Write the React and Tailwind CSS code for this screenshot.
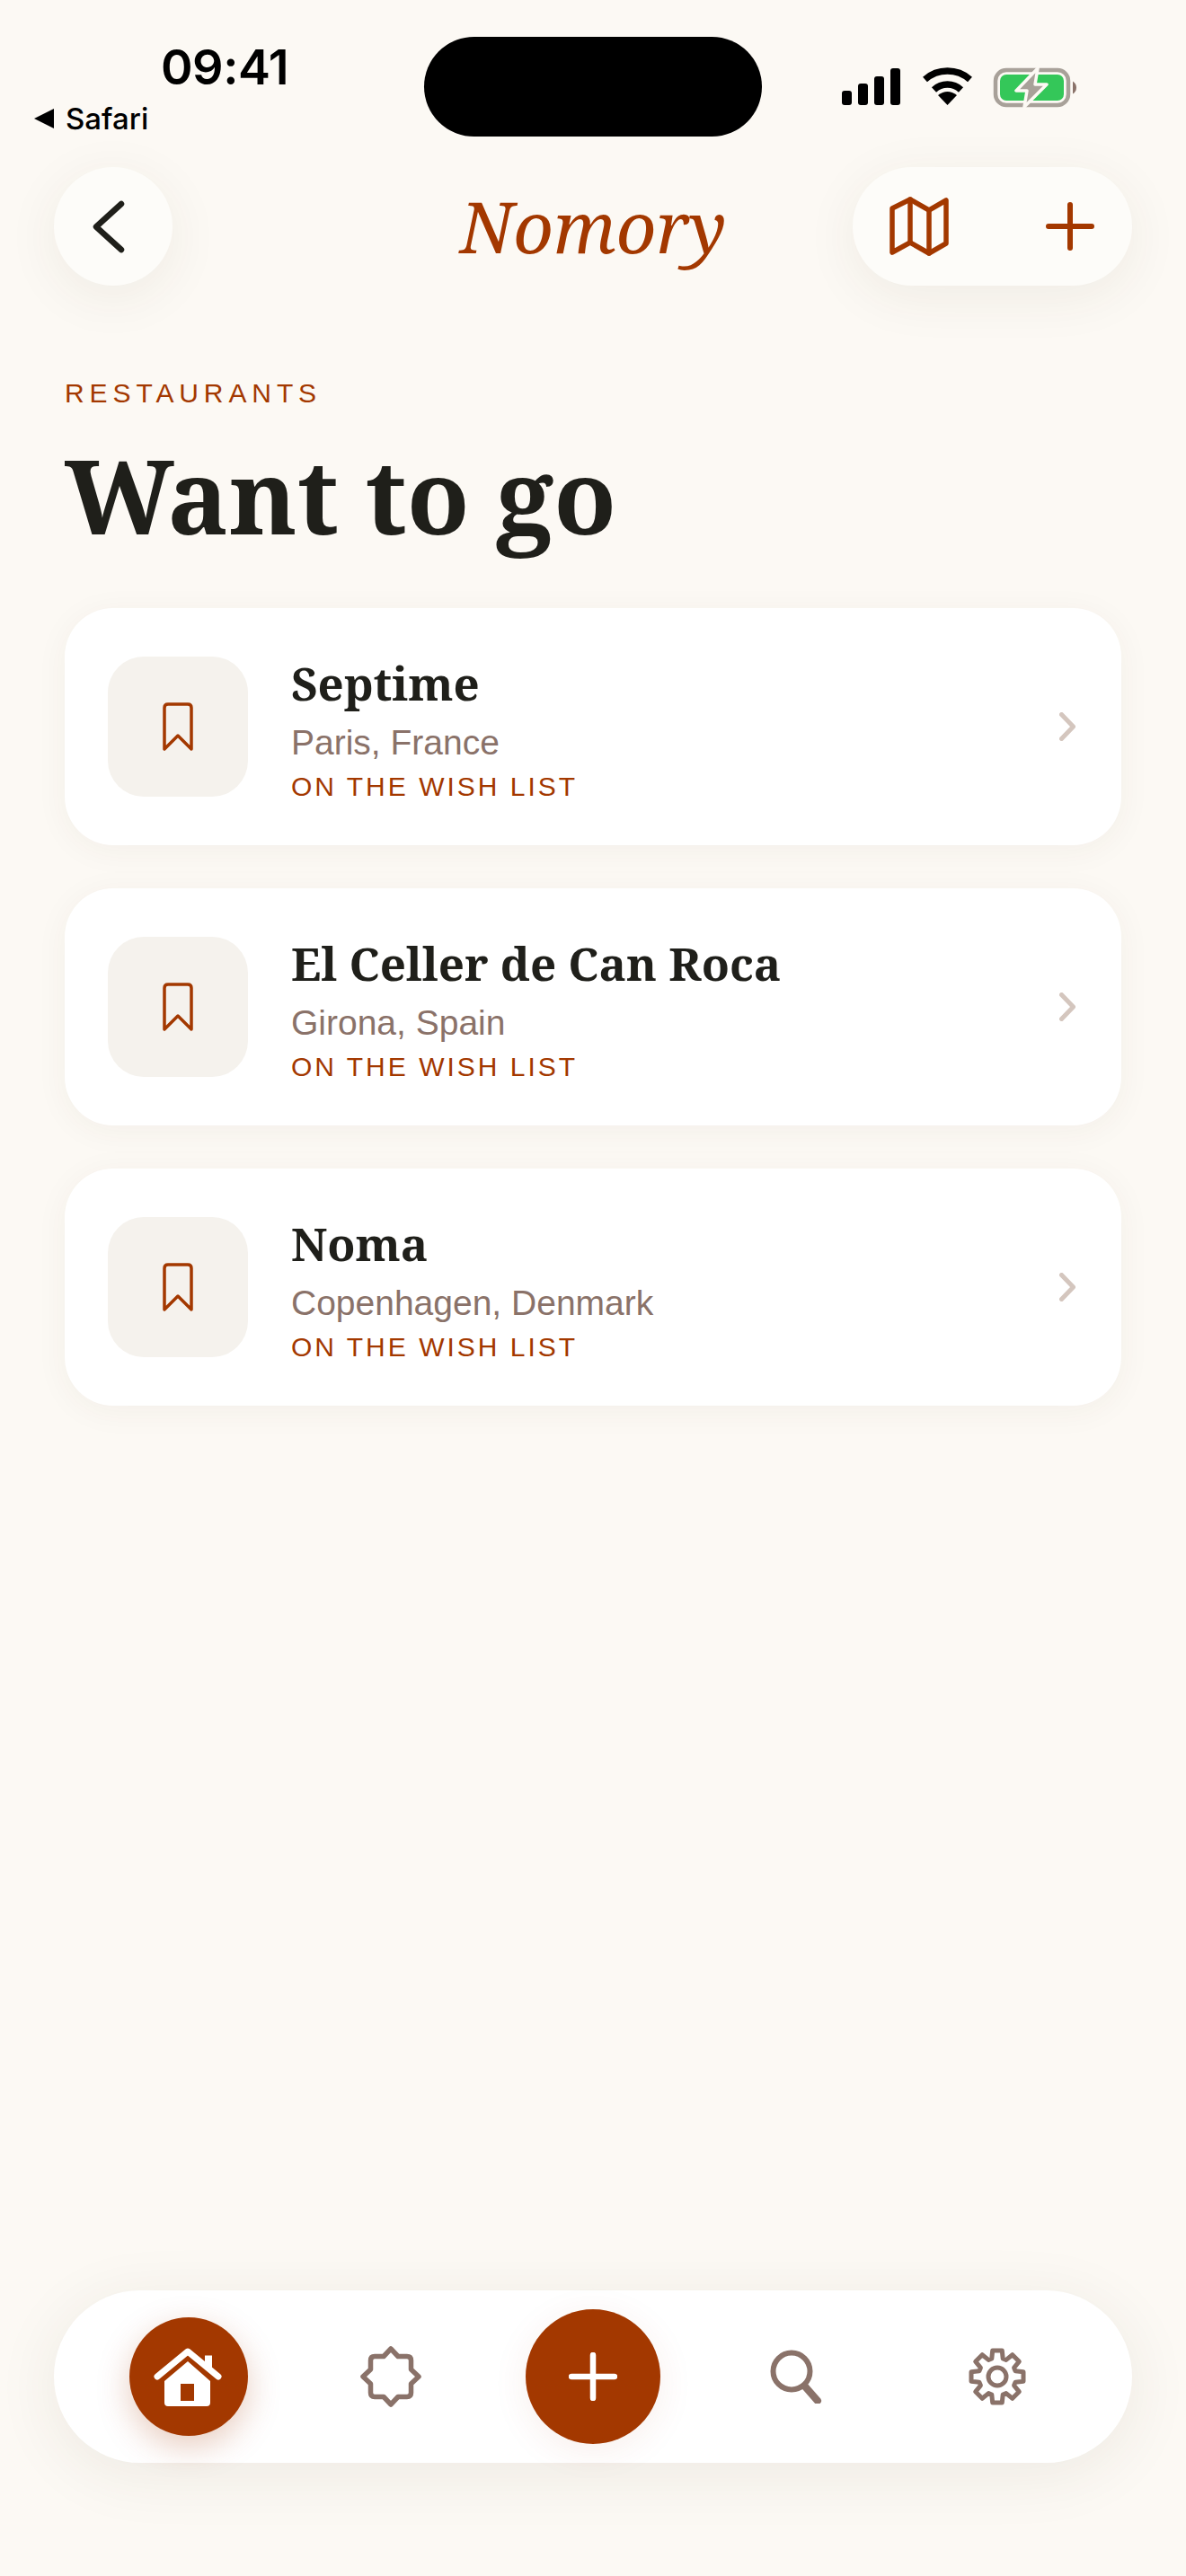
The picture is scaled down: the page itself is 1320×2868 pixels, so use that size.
const serif = "font-['Noto_Serif',serif]"

const places = [
  { name: 'Septime', place: 'Paris, France' },
  { name: 'El Celler de Can Roca', place: 'Girona, Spain' },
  { name: 'Noma', place: 'Copenhagen, Denmark' },
]

// 8 tooth gear outline, in a 66x66 box
function gearPath() {
  const pts = []
  for (let i = 0; i < 8; i++) {
    const a = (i * Math.PI) / 4
    const step = [
      [-0.3, 21],
      [-0.18, 29.5],
      [0.18, 29.5],
      [0.3, 21],
    ]
    step.forEach(([d, r]) => {
      const x = 33 + r * Math.sin(a + d)
      const y = 33 - r * Math.cos(a + d)
      pts.push(`${x.toFixed(1)} ${y.toFixed(1)}`)
    })
  }
  return 'M' + pts.join('L') + 'Z'
}

function StatusBar() {
  return (
    <div className="flex h-[186px] items-start font-['Inter',sans-serif] text-black">
      <div className="w-[472px] shrink-0">
        <div className="pl-[179px] pt-[42px] text-[54px] leading-[66px] font-semibold tracking-[-0.5px]">09:41</div>
        <div className="mt-[4px] flex items-center gap-[13px] pl-[38px] text-[33px] leading-[40px] font-medium">
          <span className="h-0 w-0 border-y-[11px] border-r-[22px] border-y-transparent border-r-black"></span>
          <span>Safari</span>
        </div>
      </div>
      <div className="mt-[41px] h-[111px] w-[376px] shrink-0 rounded-[56px] bg-black"></div>
      <div className="ml-[89px] mt-[75px] flex items-start">
        {/* signal */}
        <svg width="65" height="42" viewBox="0 0 65 42" fill="black">
          <rect x="0" y="26" width="11" height="16" rx="3" />
          <rect x="18" y="18" width="11" height="24" rx="3" />
          <rect x="36" y="10" width="11" height="32" rx="3" />
          <rect x="54" y="1" width="11" height="41" rx="3" />
        </svg>
        {/* wifi */}
        <svg className="ml-[24px]" width="58" height="42" viewBox="0 0 58 42" fill="none" stroke="black">
          <path d="M3.5 13.5A38 38 0 0 1 53.5 13.5" strokeWidth="7.5" />
          <path d="M13.5 25A22 22 0 0 1 43.5 25" strokeWidth="7.5" />
          <path d="M28.5 42L18 31Q28.5 23 39 31Z" fill="black" stroke="none" />
        </svg>
        {/* battery */}
        <svg className="ml-[21px]" width="94" height="46" viewBox="0 0 94 46" fill="none">
          <rect x="3" y="3" width="81" height="39" rx="12" stroke="#a8a199" strokeWidth="4.5" />
          <rect x="8" y="8" width="71" height="29" rx="7" fill="#34c759" />
          <path d="M89 15.5Q93 18 93 22.5T89 29.5Z" fill="#8a7269" />
          <path d="M50 1L26 26H38L35 44L60 19H47Z" fill="#a8a199" stroke="#fcf9f4" strokeWidth="3.5" strokeLinejoin="round" />
        </svg>
      </div>
    </div>
  )
}

function Header() {
  return (
    <div className="mx-[60px] grid h-[132px] grid-cols-[1fr_auto_1fr] items-center">
      <button className="flex h-[132px] w-[132px] items-center justify-center rounded-full bg-[#fdfcf9] shadow-[0_12px_60px_rgba(70,50,30,0.07)]">
        <svg width="132" height="132" viewBox="0 0 132 132" fill="none" stroke="#1f1f1a" strokeWidth="6.5" strokeLinecap="round" strokeLinejoin="round">
          <path d="M75 41L47 66.5L75 92" />
        </svg>
      </button>
      <div className={`${serif} text-[78px] leading-[100px] italic text-[#a33800]`}>Nomory</div>
      <div className="flex h-[132px] w-[311px] items-center justify-self-end rounded-full bg-[#fdfcf9] pl-[41px] shadow-[0_12px_60px_rgba(70,50,30,0.07)]">
        <svg width="66" height="66" viewBox="0 0 66 66" fill="none" stroke="#a33800" strokeWidth="5.5" strokeLinecap="round" strokeLinejoin="round">
          <path d="M3 13L23 3L44 15L63 4V52L44 63L23 51L3 62Z" />
          <path d="M23 3V51M44 15V63" />
        </svg>
        <svg className="ml-[108px]" width="54" height="54" viewBox="0 0 54 54" fill="none" stroke="#a33800" strokeWidth="6" strokeLinecap="round">
          <path d="M27 3V51M3 27H51" />
        </svg>
      </div>
    </div>
  )
}

function PlaceCard({ name, place }) {
  return (
    <div className="flex h-[264px] items-center rounded-[54px] bg-white pl-[48px] pr-[51px] shadow-[0_6px_36px_rgba(70,50,30,0.05)]">
      <div className="flex h-[156px] w-[156px] shrink-0 items-center justify-center rounded-[40px] bg-[#f5f2ed]">
        <svg width="36" height="54" viewBox="0 0 36 54" fill="none" stroke="#a33800" strokeWidth="3.5" strokeLinecap="round" strokeLinejoin="round">
          <path d="M3 52V6Q3 2 7 2H29Q33 2 33 6V52L18 37Z" />
        </svg>
      </div>
      <div className="ml-[48px] flex-1 pt-[7px]">
        <div className={`${serif} text-[51px] leading-[60px] font-bold text-[#1f1f1a]`}>{name}</div>
        <div className="mt-[14px] font-['Liberation_Sans',sans-serif] text-[39px] leading-[46px] text-[#8a7269]">{place}</div>
        <div className="mt-[7px] font-['Liberation_Sans',sans-serif] text-[30px] leading-[38px] tracking-[3px] text-[#a33800]">ON THE WISH LIST</div>
      </div>
      <svg width="18" height="32" viewBox="0 0 18 32" fill="none" stroke="#d4c6be" strokeWidth="5" strokeLinecap="round" strokeLinejoin="round">
        <path d="M2.500 2.500L15.500 16L2.500 29.500" />
      </svg>
    </div>
  )
}

function BottomNav() {
  return (
    <div className="mx-[60px] mb-[126px] flex h-[192px] items-center justify-center rounded-full bg-white shadow-[0_12px_70px_rgba(70,50,30,0.08)]">
      <div className="flex w-[225px] justify-center">
        <div className="flex h-[132px] w-[132px] items-center justify-center rounded-full bg-[#a33800] shadow-[0_12px_36px_rgba(163,56,0,0.25)]">
          <svg width="100" height="90" viewBox="0 0 100 90" fill="white">
            <path fillRule="evenodd" d="M49 28L74 50V74Q74 78 70 78H27Q23 78 23 74V50ZM41 53V72H56V53Z" />
            <path d="M68 21.500H76V39L68 33Z" />
            <path d="M15 45L49 17L83 45" fill="none" stroke="white" strokeWidth="7" strokeLinecap="round" strokeLinejoin="round" />
          </svg>
        </div>
      </div>
      <div className="flex w-[225px] justify-center">
        <svg width="72" height="72" viewBox="0 0 72 72" fill="none" stroke="#8a7269" strokeWidth="5.5" strokeLinecap="round" strokeLinejoin="round">
          <path d="M36 5L44 13.500H54Q58.500 13.500 58.500 18V28L67 36L58.500 44V54Q58.500 58.500 54 58.500H44L36 67L28 58.500H18Q13.500 58.500 13.500 54V44L5 36L13.500 28V18Q13.500 13.500 18 13.500H28Z" />
        </svg>
      </div>
      <div className="flex w-[225px] justify-center">
        <div className="flex h-[150px] w-[150px] items-center justify-center rounded-full bg-[#a33800] shadow-[0_8px_40px_rgba(163,56,0,0.08)]">
          <svg width="54" height="54" viewBox="0 0 54 54" fill="none" stroke="white" strokeWidth="6.5" strokeLinecap="round">
            <path d="M27 3V51M3 27H51" />
          </svg>
        </div>
      </div>
      <div className="flex w-[225px] justify-center">
        <svg width="60" height="60" viewBox="0 0 60 60" fill="none" stroke="#8a7269" strokeLinecap="round">
          <circle cx="26" cy="24" r="20.500" strokeWidth="6" />
          <path d="M41 41L55 57" strokeWidth="8" />
        </svg>
      </div>
      <div className="flex w-[225px] justify-center">
        <svg width="66" height="66" viewBox="0 0 66 66" fill="none" stroke="#8a7269" strokeWidth="5" strokeLinejoin="round">
          <path d={gearPath()} />
          <circle cx="33" cy="33" r="10" />
        </svg>
      </div>
    </div>
  )
}

export default function App() {
  return (
    <div className="flex h-[2868px] w-[1320px] flex-col overflow-hidden bg-[#fcf9f4]">
      <StatusBar />
      <Header />
      <div className="flex-1 px-[72px]">
        <div className="mt-[102px] font-['Liberation_Sans',sans-serif] text-[30px] leading-[36px] tracking-[5.9px] text-[#a33800]">RESTAURANTS</div>
        <h1 className={`${serif} mt-[25px] text-[114px] leading-[140px] font-bold text-[#1f1f1a]`}>Want to go</h1>
        <div className="mt-[56px] flex flex-col gap-[48px]">
          {places.map((p) => (
            <PlaceCard key={p.name} name={p.name} place={p.place} />
          ))}
        </div>
      </div>
      <BottomNav />
    </div>
  )
}
